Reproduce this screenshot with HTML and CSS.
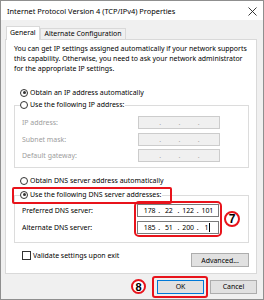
FILE: index.html
```html
<!doctype html>
<html>
<head>
	<meta charset="utf-8" />
	<title>IPv4 Properties</title>
	<link rel="stylesheet" href="styles.css">
</head>
<body>
	<div class="window">
		<div class="titlebar">
			<span class="title">Internet Protocol Version 4 (TCP/IPv4) Properties</span>
			<svg class="close" width="9" height="9" viewBox="0 0 9 9">
				<path d="M0.5 0.5 L8.5 8.5 M8.5 0.5 L0.5 8.5" stroke="#222" stroke-width="0.9" fill="none" />
			</svg>
		</div>
		<div class="content">
			<div class="tabs">
				<div class="tab active">General</div>
				<div class="tab">Alternate Configuration</div>
			</div>
			<div class="panel">
				<p class="intro">
					You can get IP settings assigned automatically if your network supports<br />
					this capability. Otherwise, you need to ask your network administrator<br />
					for the appropriate IP settings.
				</p>

				<div class="option first"><span class="radio checked"></span>Obtain an IP address automatically</div>
				<fieldset class="group ipgroup">
					<legend><span class="radio"></span>Use the following IP address:</legend>
					<div class="grid">
						<div class="labels disabled">
							<div class="lbl">IP address:</div>
							<div class="lbl">Subnet mask:</div>
							<div class="lbl">Default gateway:</div>
						</div>
						<div class="fields">
							<div class="ipbox off"><span class="seg"></span><span class="dot">.</span><span class="seg"></span><span class="dot">.</span><span class="seg"></span><span class="dot">.</span><span class="seg"></span></div>
							<div class="ipbox off"><span class="seg"></span><span class="dot">.</span><span class="seg"></span><span class="dot">.</span><span class="seg"></span><span class="dot">.</span><span class="seg"></span></div>
							<div class="ipbox off"><span class="seg"></span><span class="dot">.</span><span class="seg"></span><span class="dot">.</span><span class="seg"></span><span class="dot">.</span><span class="seg"></span></div>
						</div>
					</div>
				</fieldset>

				<div class="option second"><span class="radio"></span>Obtain DNS server address automatically</div>
				<fieldset class="group dnsgroup">
					<legend class="marked"><span class="radio checked"></span>Use the following DNS server addresses:</legend>
					<div class="grid">
						<div class="labels">
							<div class="lbl">Preferred DNS server:</div>
							<div class="lbl">Alternate DNS server:</div>
						</div>
						<div class="fields highlight">
							<div class="ipbox"><span class="seg">178</span><span class="dot">.</span><span class="seg">22</span><span class="dot">.</span><span class="seg">122</span><span class="dot">.</span><span class="seg">101</span></div>
							<div class="ipbox"><span class="seg">185</span><span class="dot">.</span><span class="seg">51</span><span class="dot">.</span><span class="seg">200</span><span class="dot">.</span><span class="seg">1<span class="caret"></span></span></div>
						</div>
						<div class="step step7">7</div>
					</div>
				</fieldset>

				<div class="bottomrow">
					<div class="check"><span class="box"></span>Validate settings upon exit</div>
					<div class="btn advanced">Advanced...</div>
				</div>
			</div>

			<div class="footer">
				<div class="step step8">8</div>
				<div class="okwrap"><div class="btn ok">OK</div></div>
				<div class="btn cancel">Cancel</div>
			</div>
		</div>
	</div>
</body>
</html>
```

FILE: styles.css
```css
html, body
{
	margin: 0;
	padding: 0;
	background: #f0f0f0;
}

body
{
	font-family: "Noto Sans", "DejaVu Sans", sans-serif;
	font-size: 6.95px;
	color: #000;
}

.window
{
	width: 264px;
	height: 300px;
	box-sizing: border-box;
	border: 1px solid #8f8f8f;
	background: #f0f0f0;
	display: flex;
	flex-direction: column;
}

.titlebar
{
	height: 19px;
	background: #fff;
	display: flex;
	align-items: center;
	justify-content: space-between;
	padding: 0 6px 0 6px;
}

.title
{
	font-size: 7.4px;
	color: #000;
}

.close
{
	margin-top: 1px;
}

.content
{
	padding: 6px 6px 0 4px;
	display: flex;
	flex-direction: column;
	flex: 1;
}

/* tabs */

.tabs
{
	display: flex;
	align-items: flex-end;
	padding-left: 1px;
	position: relative;
	z-index: 1;
}

.tab
{
	height: 10px;
	line-height: 9px;
	padding: 0 4px;
	border: 1px solid #d9d9d9;
	border-bottom: none;
	background: #f0f0f0;
	white-space: nowrap;
}

.tab.active
{
	height: 13px;
	line-height: 12px;
	background: #fff;
	margin-bottom: -1px;
	padding: 0 3px;
}

.panel
{
	width: 252px;
	box-sizing: border-box;
	background: #fff;
	border: 1px solid #d9d9d9;
	padding: 4px 7px 7px 8px;
	height: 235px;
}

.intro
{
	margin: 0 0 13px 0;
	line-height: 10px;
	white-space: nowrap;
}

/* radios and checkbox */

.radio
{
	display: inline-block;
	width: 8px;
	height: 8px;
	box-sizing: border-box;
	border: 1px solid #333;
	border-radius: 50%;
	background: #fff;
	margin-right: 2px;
	vertical-align: -1.5px;
	position: relative;
}

.radio.checked::after
{
	content: "";
	position: absolute;
	left: 1.5px;
	top: 1.5px;
	width: 3px;
	height: 3px;
	border-radius: 50%;
	background: #333;
}

.option
{
	height: 12px;
	line-height: 12px;
	padding-left: 6px;
	white-space: nowrap;
}

.option.second
{
	margin-top: 7px;
}

.group
{
	margin: 0;
	border: 1px solid #dcdcdc;
	padding: 0 0 0 5px;
}

.group legend
{
	padding: 0 1px 0 0;
	height: 12px;
	line-height: 12px;
	white-space: nowrap;
	background: #fff;
	position: relative;
}

.marked::after
{
	content: "";
	position: absolute;
	left: -8px;
	right: -10px;
	top: -2px;
	bottom: -3px;
	border: 2px solid #e8131b;
	border-radius: 2px;
}

.grid
{
	display: flex;
	align-items: center;
	padding-left: 2px;
}

.labels, .fields
{
	display: flex;
	flex-direction: column;
}

.labels
{
	flex: 1;
}

.lbl
{
	height: 13px;
	line-height: 13px;
	white-space: nowrap;
}

.disabled
{
	color: #9d9d9d;
}

.ipgroup
{
	padding-right: 28px;
	padding-bottom: 5px;
}

.ipgroup .grid
{
	padding-top: 5px;
}

.ipgroup .labels, .ipgroup .fields
{
	gap: 3.5px;
}

.dnsgroup
{
	margin-top: 2px;
	padding-right: 8px;
	padding-bottom: 8px;
}

.dnsgroup .grid
{
	padding-top: 3px;
}

.dnsgroup .labels, .dnsgroup .fields
{
	gap: 4px;
}

/* ip address boxes */

.ipbox
{
	width: 82px;
	height: 13px;
	box-sizing: border-box;
	border: 1px solid #7a7a7a;
	background: #fff;
	display: flex;
	align-items: center;
	padding: 0 2px 0 3px;
	line-height: 11px;
}

.ipbox.off
{
	border-color: #cccccc;
	background: #f0f0f0;
}

.seg
{
	flex: 1;
	text-align: center;
	white-space: nowrap;
}

.dot
{
	width: 2px;
	text-align: center;
}

.off .dot
{
	color: #a8a8a8;
}

.caret
{
	display: inline-block;
	width: 1px;
	height: 9px;
	background: #000;
	margin-left: 1px;
	vertical-align: -2px;
}

.highlight
{
	outline: 2px solid #e8131b;
	outline-offset: 1px;
	border-radius: 2px;
}

/* numbered markers */

.step
{
	box-sizing: border-box;
	border: 2px solid #e8131b;
	border-radius: 50%;
	background: #fff;
	font-family: "Liberation Sans", Arial, sans-serif;
	font-weight: bold;
	color: #000;
	display: flex;
	align-items: center;
	justify-content: center;
}

.step7
{
	width: 16px;
	height: 16px;
	font-size: 12px;
	margin-left: 5px;
}

.step8
{
	width: 15px;
	height: 15px;
	font-size: 11px;
	margin-right: 6px;
}

/* bottom rows */

.bottomrow
{
	display: flex;
	justify-content: space-between;
	align-items: flex-start;
	margin-top: 8px;
}

.check
{
	height: 10px;
	line-height: 10px;
	padding-left: 8px;
	white-space: nowrap;
}

.box
{
	display: inline-block;
	width: 9px;
	height: 9px;
	box-sizing: border-box;
	border: 1px solid #333;
	background: #fff;
	margin-right: 2px;
	vertical-align: -2px;
}

.btn
{
	height: 14px;
	box-sizing: border-box;
	border: 1px solid #adadad;
	background: #e1e1e1;
	display: flex;
	align-items: center;
	justify-content: center;
}

.advanced
{
	width: 58px;
	margin-top: 2px;
}

.footer
{
	flex: 1;
	display: flex;
	align-items: center;
	justify-content: flex-end;
}

.okwrap
{
	border: 2px solid #e8131b;
	border-radius: 3px;
	padding: 2px 2px 2px 3px;
	margin-right: 2px;
}

.ok
{
	width: 47px;
	border-color: #0078d7;
}

.cancel
{
	width: 47px;
}
```
